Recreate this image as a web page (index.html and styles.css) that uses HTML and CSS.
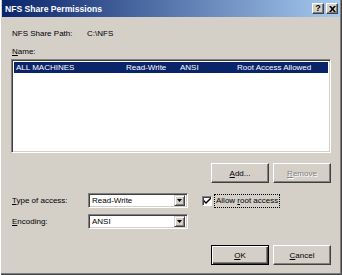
FILE: index.html
```html
<!DOCTYPE html>
<html lang="en">
<head>
  <meta charset="UTF-8" />
  <title>NFS Share Permissions</title>
  <link rel="stylesheet" href="styles.css">
</head>
<body>
  <div class="window">
    <div class="titlebar">
      <span class="title">NFS Share Permissions</span>
      <div class="title-btns">
        <span class="tbtn">?</span>
        <span class="tbtn">
          <svg width="7" height="6" viewBox="0 0 7 6"><path d="M0 0h2l1.5 1.8 1.5-1.8h2l-2.5 3 2.5 3h-2l-1.5-1.8-1.5 1.8h-2l2.5-3z"/></svg>
        </span>
      </div>
    </div>
    <div class="content">
      <div class="path-row">
        <span class="path-label">NFS Share Path:</span>
        <span>C:\NFS</span>
      </div>
      <div class="name-label"><u>N</u>ame:</div>
      <div class="listbox">
        <div class="list-row selected">
          <span>ALL MACHINES</span>
          <span>Read-Write</span>
          <span>ANSI</span>
          <span>Root Access Allowed</span>
        </div>
      </div>
      <div class="btn-row">
        <button class="btn"><u>A</u>dd...</button>
        <button class="btn" disabled><u>R</u>emove</button>
      </div>
      <div class="fields">
        <label class="field-label"><u>T</u>ype of access:</label>
        <div class="combo">
          <span class="combo-text">Read-Write</span>
          <span class="combo-arrow"><svg width="5" height="3" viewBox="0 0 5 3"><path d="M0 0h5l-2.5 3z"/></svg></span>
        </div>
        <div class="check">
          <span class="checkbox"><svg width="7" height="7" viewBox="0 0 7 7"><path d="M0 3l2 2 5-5v2l-5 5-2-2z"/></svg></span>
          <span class="check-label">Allow <u>r</u>oot access</span>
        </div>
        <label class="field-label"><u>E</u>ncoding:</label>
        <div class="combo">
          <span class="combo-text">ANSI</span>
          <span class="combo-arrow"><svg width="5" height="3" viewBox="0 0 5 3"><path d="M0 0h5l-2.5 3z"/></svg></span>
        </div>
      </div>
      <div class="btn-row bottom">
        <button class="btn default"><u>O</u>K</button>
        <button class="btn"><u>C</u>ancel</button>
      </div>
    </div>
  </div>
</body>
</html>
```

FILE: styles.css
```css
:root {
  --face: #d4d0c8;
  --shadow: #808080;
  --dark: #404040;
  --hilite: #ffffff;
  --navy: #0a246a;
}
html, body {
  margin: 0;
  padding: 0;
  background: var(--face);
  font-family: "Liberation Sans", Arial, sans-serif;
  font-size: 8px;
  color: #000;
}
.window {
  width: 342px;
  height: 275px;
  box-sizing: border-box;
  padding: 0 2px 2px 2px;
  background: var(--face);
  box-shadow: inset 1px 0 #fff, inset -1px -1px var(--dark), inset -2px -2px var(--shadow);
}
.titlebar {
  height: 17px;
  display: flex;
  align-items: center;
  justify-content: space-between;
  padding-left: 3px;
  background: linear-gradient(90deg, var(--navy) 0%, #a6caf0 100%);
}
.title {
  color: #fff;
  font-weight: bold;
  font-size: 8.6px;
}
.title-btns {
  display: flex;
  gap: 2px;
  margin-right: 2px;
}
.tbtn {
  width: 12px;
  height: 11px;
  box-sizing: border-box;
  display: flex;
  align-items: center;
  justify-content: center;
  background: var(--face);
  border: 1px solid;
  border-color: #fff var(--dark) var(--dark) #fff;
  box-shadow: inset -1px -1px var(--shadow);
  font-weight: bold;
  font-size: 9px;
  line-height: 1;
}
.content {
  padding: 0 9px;
}
.path-row {
  margin-top: 11px;
  line-height: 12px;
  display: flex;
}
.path-label {
  width: 75px;
  padding-left: 1px;
}
.name-label {
  margin-top: 6px;
  line-height: 12px;
  padding-left: 1px;
}
.listbox {
  margin-top: 1px;
  height: 94px;
  box-sizing: border-box;
  background: #fff;
  border: 1px solid;
  border-color: var(--shadow) #fff #fff var(--shadow);
  box-shadow: inset 1px 1px var(--dark), inset -1px -1px var(--face);
  padding: 2px 2px 0 2px;
}
.list-row {
  display: grid;
  grid-template-columns: 110px 54px 57px auto;
  height: 11px;
  line-height: 11px;
  padding-left: 2px;
  white-space: nowrap;
}
.list-row.selected {
  background: var(--navy);
  color: #fff;
}
.btn-row {
  display: flex;
  justify-content: flex-end;
  gap: 4px;
  margin-top: 10px;
}
.btn-row.bottom {
  margin-top: 16px;
}
.btn {
  width: 58px;
  height: 20px;
  box-sizing: border-box;
  padding: 0;
  font: inherit;
  color: #000;
  background: var(--face);
  border: 1px solid;
  border-color: #fff var(--dark) var(--dark) #fff;
  box-shadow: inset -1px -1px var(--shadow);
}
.btn:disabled {
  color: var(--shadow);
  text-shadow: 1px 1px #fff;
}
.btn.default {
  border-color: #000;
  box-shadow: inset 1px 1px #fff, inset -1px -1px var(--dark), inset -2px -2px var(--shadow);
}
.fields {
  margin-top: 10px;
  display: grid;
  grid-template-columns: 77px 100px auto;
  row-gap: 6px;
  align-items: center;
}
.field-label {
  padding-left: 1px;
}
.combo {
  height: 15px;
  box-sizing: border-box;
  display: flex;
  align-items: center;
  background: #fff;
  border: 1px solid;
  border-color: var(--shadow) #fff #fff var(--shadow);
  box-shadow: inset 1px 1px var(--dark), inset -1px -1px var(--face);
  padding: 2px;
}
.combo-text {
  flex: 1;
  padding-left: 1px;
}
.combo-arrow {
  width: 11px;
  height: 11px;
  box-sizing: border-box;
  display: flex;
  align-items: center;
  justify-content: center;
  background: var(--face);
  border: 1px solid;
  border-color: var(--face) var(--dark) var(--dark) var(--face);
  box-shadow: inset 1px 1px #fff, inset -1px -1px var(--shadow);
}
.check {
  display: flex;
  align-items: center;
  gap: 2px;
  margin-left: 14px;
}
.checkbox {
  width: 10px;
  height: 10px;
  box-sizing: border-box;
  display: flex;
  align-items: center;
  justify-content: center;
  background: #fff;
  border: 1px solid;
  border-color: var(--shadow) #fff #fff var(--shadow);
  box-shadow: inset 1px 1px var(--dark);
}
.check-label {
  padding: 1px 1px;
  border: 1px dotted #000;
  line-height: 10px;
}
```
